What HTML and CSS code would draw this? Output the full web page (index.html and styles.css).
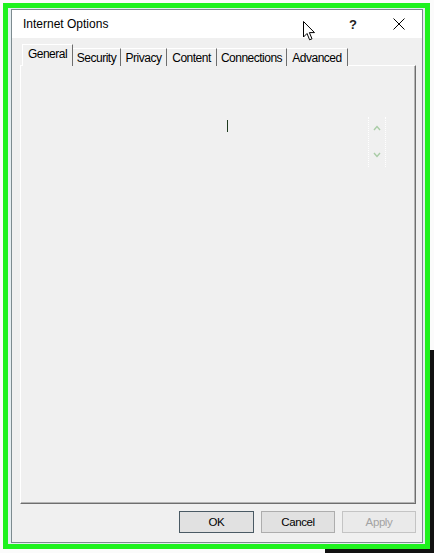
FILE: index.html
```html
<!DOCTYPE html>
<html lang="en">
<head>
  <meta charset="UTF-8">
  <meta name="viewport" content="width=device-width, initial-scale=1.0">
  <title>Internet Options</title>
  <link rel="stylesheet" href="styles.css">
</head>
<body>
  <div class="frame">
    <div class="dialog">
      <!-- Barra de título -->
      <div class="titlebar">
        <span class="title">Internet Options</span>
        <span class="help">?</span>
        <span class="close">
          <svg width="12" height="12" viewBox="0 0 12 12"><path d="M0.5 0.5 L11.5 11.5 M11.5 0.5 L0.5 11.5" stroke="#000" stroke-width="1" fill="none"/></svg>
        </span>
      </div>

      <div class="body">
        <ul class="tabs">
          <li class="tab active" style="width: 51px;">General</li>
          <li class="tab" style="width: 48px;">Security</li>
          <li class="tab" style="width: 46px;">Privacy</li>
          <li class="tab" style="width: 50px;">Content</li>
          <li class="tab" style="width: 70px;">Connections</li>
          <li class="tab" style="width: 61px;">Advanced</li>
        </ul>

        <div class="panel">
          <div class="panel-row">
            <span class="caret"></span>
            <div class="spinner">
              <svg width="8" height="6" viewBox="0 0 8 6"><polyline points="1,5 4,1.5 7,5" stroke="#a9cca6" stroke-width="1.4" fill="none"/></svg>
              <svg width="8" height="6" viewBox="0 0 8 6"><polyline points="1,1 4,4.5 7,1" stroke="#a9cca6" stroke-width="1.4" fill="none"/></svg>
            </div>
          </div>
        </div>

        <div class="buttons">
          <button class="btn default">OK</button>
          <button class="btn">Cancel</button>
          <button class="btn" disabled>Apply</button>
        </div>
      </div>
    </div>
  </div>

  <!-- Cursor do mouse -->
  <svg class="pointer" width="13" height="20" viewBox="0 0 13 20">
    <path d="M0.5 0.5 L0.5 16 L4 12.5 L6.6 18.8 L9 17.8 L6.4 11.6 L11.5 11.6 Z" fill="#fff" stroke="#000" stroke-width="1"/>
  </svg>
  <div class="shade-right"></div>
  <div class="shade-bottom"></div>
</body>
</html>
```

FILE: styles.css
```css
/* styles.css */

body {
  margin: 0;
  background-color: #fbfbfb;
  font-family: 'Liberation Sans', Arial, sans-serif;
  position: relative;
  height: 553px;
  overflow: hidden;
}

.frame {
  margin: 3px 4px 4px 3px;
  border: 5px solid #1ef21e;
  padding: 1px 2px 1px 3px;
  background-color: #e4edf0;
  height: 534px;
}

.dialog {
  border: 1px solid #7d8b90;
  background-color: #f0f0f0;
  height: 532px;
  display: flex;
  flex-direction: column;
}

.titlebar {
  height: 28px;
  background-color: #fff;
  display: flex;
  align-items: center;
}

.title {
  flex: 1;
  padding-left: 11px;
  font-size: 12px;
  color: #000;
}

.help, .close {
  width: 46px;
  height: 28px;
  display: flex;
  align-items: center;
  justify-content: center;
}

.help {
  font-size: 13px;
  font-weight: bold;
  color: #222;
}

.body {
  flex: 1;
  padding: 7px 6px 8px 8px;
  display: flex;
  flex-direction: column;
}

.tabs {
  list-style: none;
  margin: 0 0 -1px 0;
  padding: 0 0 0 2px;
  height: 21px;
  display: flex;
  align-items: flex-end;
  position: relative;
  z-index: 1;
}

.tab {
  box-sizing: border-box;
  height: 18px;
  border-top: 1px solid #fff;
  border-right: 1px solid #6e6e6e;
  font-size: 12px;
  letter-spacing: -0.5px;
  color: #000;
  text-align: center;
  line-height: 18px;
  background-color: #f0f0f0;
}

.tab.active {
  height: 22px;
  border-left: 1px solid #fff;
  line-height: 18px;
}

.panel {
  height: 439px;
  box-sizing: border-box;
  border-top: 1px solid #fff;
  border-left: 1px solid #fff;
  border-right: 1px solid #6e6e6e;
  border-bottom: 1px solid #6e6e6e;
  background-color: #f0f0f0;
  box-shadow: inset -1px -1px 0 #b4b4b4;
}

.panel-row {
  display: flex;
  align-items: flex-start;
  padding-top: 51px;
}

.caret {
  width: 1px;
  height: 12px;
  margin-top: 3px;
  margin-left: 206px;
  background-color: #1e3a1e;
}

.spinner {
  margin-left: auto;
  margin-right: 29px;
  width: 18px;
  height: 50px;
  border-left: 1px dotted #ffffff;
  border-right: 1px dotted #ffffff;
  display: flex;
  flex-direction: column;
  align-items: center;
  justify-content: space-between;
  padding: 8px 0 9px;
  box-sizing: border-box;
}

.buttons {
  margin-top: 7px;
  display: flex;
  justify-content: flex-end;
  gap: 7px;
}

.btn {
  width: 74px;
  height: 22px;
  border: 1px solid #adadad;
  background-color: #e1e1e1;
  font-family: 'Liberation Sans', Arial, sans-serif;
  font-size: 11.5px;
  letter-spacing: -0.4px;
  color: #000;
  padding: 0;
}

.btn.default {
  width: 75px;
  border-color: #4a5a64;
  box-shadow: inset 0 -2px 0 -1px #e1e1e1, inset 0 -3px 0 -2px #7a7a7a;
}

.btn:disabled {
  color: #a3a3a3;
  border-color: #c4c4c4;
  background-color: #eaeaea;
}

.pointer {
  position: absolute;
  left: 303px;
  top: 21px;
}

.shade-right {
  position: absolute;
  right: 0;
  top: 350px;
  width: 4px;
  height: 203px;
  background-color: #111;
}

.shade-bottom {
  position: absolute;
  left: 325px;
  bottom: 0;
  width: 109px;
  height: 4px;
  background-color: #111;
}
```
